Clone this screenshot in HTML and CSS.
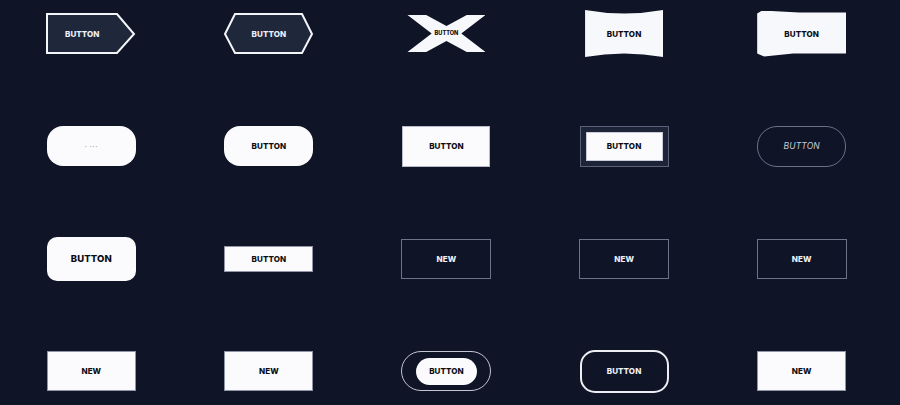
FILE: index.html
```html
<!DOCTYPE html>
<html lang="en">
<head>
<meta charset="utf-8">
<title>Buttons</title>
<link rel="stylesheet" href="styles.css">
</head>
<body>
<main class="grid">
  <!-- row 1 -->
  <div class="cell">
    <button class="shape shape-arrow">
      <svg class="shape-svg" width="90" height="42" viewBox="0 0 90 42"><polygon points="1,1 71,1 88,21 71,40 1,40" /></svg>
      <span class="label label-light arrow-label">BUTTON</span>
    </button>
  </div>
  <div class="cell">
    <button class="shape shape-hex">
      <svg class="shape-svg" width="90" height="42" viewBox="0 0 90 42"><polygon points="1,21 11,1 78,1 88,21 78,40 11,40" /></svg>
      <span class="label label-light">BUTTON</span>
    </button>
  </div>
  <div class="cell">
    <button class="btn-x"><span class="label label-dark label-xs">BUTTON</span></button>
  </div>
  <div class="cell">
    <button class="btn-wave"><span class="label label-dark">BUTTON</span></button>
  </div>
  <div class="cell">
    <button class="btn-torn"><span class="label label-dark">BUTTON</span></button>
  </div>

  <!-- row 2 -->
  <div class="cell">
    <button class="btn-pill"><span class="label dots">·&nbsp;···</span></button>
  </div>
  <div class="cell">
    <button class="btn-pill"><span class="label label-dark">BUTTON</span></button>
  </div>
  <div class="cell">
    <button class="btn-box"><span class="label label-dark">BUTTON</span></button>
  </div>
  <div class="cell">
    <button class="btn-frame"><span class="frame-inner"><span class="label label-dark">BUTTON</span></span></button>
  </div>
  <div class="cell">
    <button class="btn-ghost-pill"><span class="label label-italic">BUTTON</span></button>
  </div>

  <!-- row 3 -->
  <div class="cell">
    <button class="btn-soft"><span class="label label-dark label-lg">BUTTON</span></button>
  </div>
  <div class="cell">
    <button class="btn-slim"><span class="label label-dark">BUTTON</span></button>
  </div>
  <div class="cell">
    <button class="btn-outline"><span class="label label-light">NEW</span></button>
  </div>
  <div class="cell">
    <button class="btn-outline"><span class="label label-light">NEW</span></button>
  </div>
  <div class="cell">
    <button class="btn-outline"><span class="label label-light">NEW</span></button>
  </div>

  <!-- row 4 -->
  <div class="cell">
    <button class="btn-white"><span class="label label-dark">NEW</span></button>
  </div>
  <div class="cell">
    <button class="btn-white"><span class="label label-dark">NEW</span></button>
  </div>
  <div class="cell">
    <button class="btn-ring"><span class="ring-inner"><span class="label label-dark">BUTTON</span></span></button>
  </div>
  <div class="cell">
    <button class="btn-bold-outline"><span class="label label-light">BUTTON</span></button>
  </div>
  <div class="cell">
    <button class="btn-white"><span class="label label-dark">NEW</span></button>
  </div>
</main>
</body>
</html>
```
FILE: styles.css
```css
* { box-sizing: border-box; }

html, body {
  margin: 0;
  padding: 0;
  background: #0f1426;
  width: 900px;
  height: 405px;
  overflow: hidden;
}

.grid {
  display: grid;
  grid-template-columns: repeat(5, 177.6px);
  grid-template-rows: repeat(4, 67px);
  row-gap: 45.67px;
  padding-left: 2.5px;
  place-items: center;
}

.cell {
  display: flex;
  align-items: center;
  justify-content: center;
}

button {
  font: inherit;
  margin: 0;
  padding: 0;
  border: 0;
  background: none;
  cursor: pointer;
  display: flex;
  align-items: center;
  justify-content: center;
}

.label {
  font-family: Inter, "Liberation Sans", sans-serif;
  font-weight: 800;
  font-size: 8px;
  letter-spacing: 0.1px;
  line-height: 1;
}
.label-dark { color: #0b0d14; }
.label-light { color: #eef0f6; }
.label-xs { font-size: 5.6px; letter-spacing: 0; }
.label-lg { font-size: 9.5px; }
.label-italic {
  color: #c9cbd6;
  font-style: italic;
  font-weight: 400;
  font-size: 8.5px;
}
.dots {
  color: #a7abb8;
  font-size: 7px;
  font-weight: 700;
  letter-spacing: 0.5px;
}

/* svg-shaped buttons: svg and label share one grid area */
.shape {
  display: grid;
  width: 90px;
  height: 42px;
}
.shape > * { grid-area: 1 / 1; }
.shape-svg polygon {
  fill: #1f273a;
  stroke: #f4f5f9;
  stroke-width: 2;
  stroke-linejoin: miter;
}
.shape .label { align-self: center; justify-self: center; }
.arrow-label { padding-right: 18px; }

.btn-x {
  width: 78px;
  height: 37px;
  background: #f7f8fb;
  clip-path: polygon(0 0, 24% 0, 50% 30%, 76% 0, 100% 0, 69% 50%, 100% 100%, 76% 100%, 50% 70%, 24% 100%, 0 100%, 31% 50%);
}

.btn-wave {
  width: 78px;
  height: 47px;
  background: #f7f8fb;
  clip-path: path('M0 0 Q39 7 78 0 L78 47 Q39 40 0 47 Z');
}

.btn-torn {
  width: 89px;
  height: 46px;
  background: #f7f8fb;
  clip-path: polygon(0 3px, 5px 0, 42px 2px, 89px 2px, 89px 43px, 36px 43px, 7px 46px, 0 43px);
}

.btn-pill {
  width: 89px;
  height: 40px;
  border-radius: 16px;
  background: #fbfbfd;
}

.btn-box {
  width: 88px;
  height: 41px;
  background: #fbfbfd;
  border: 1px solid #b9bcc8;
}

.btn-frame {
  width: 89px;
  height: 41px;
  background: #1e2437;
  border: 1px solid #5b6176;
  padding: 5px;
}
.frame-inner {
  flex: 1;
  align-self: stretch;
  display: flex;
  align-items: center;
  justify-content: center;
  background: #fbfbfd;
  border: 1px solid #c9ccd6;
}

.btn-ghost-pill {
  width: 89px;
  height: 41px;
  border-radius: 20px;
  border: 1px solid #6c7186;
}

.btn-soft {
  width: 89px;
  height: 44px;
  border-radius: 10px;
  background: #fbfbfd;
}

.btn-slim {
  width: 89px;
  height: 26px;
  background: #fbfbfd;
  border: 1px solid #9296a8;
}

.btn-outline {
  width: 90px;
  height: 40px;
  border: 1px solid #6e7387;
}

.btn-white {
  width: 89px;
  height: 40px;
  background: #fbfbfd;
  border: 1px solid #8f94a6;
}

.btn-ring {
  width: 90px;
  height: 40px;
  border-radius: 20px;
  border: 1px solid #c3c6d2;
}
.ring-inner {
  width: 61px;
  height: 27px;
  border-radius: 14px;
  background: #fbfbfd;
  display: flex;
  align-items: center;
  justify-content: center;
}

.btn-bold-outline {
  width: 89px;
  height: 43px;
  border-radius: 15px;
  border: 2px solid #eceef4;
}
```
